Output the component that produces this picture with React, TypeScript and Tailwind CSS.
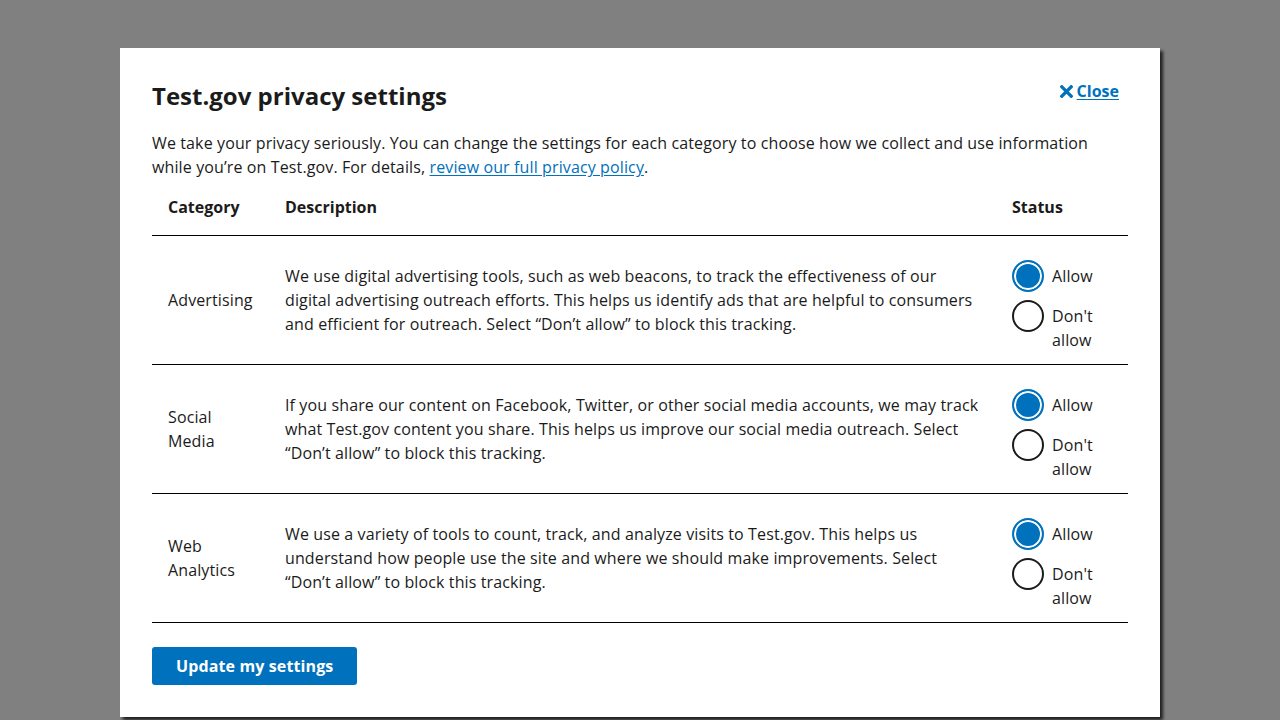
import React, { useState } from "react";

/* data */
const rows = [
  {
    key: "ads",
    name: "Advertising",
    text: "We use digital advertising tools, such as web beacons, to track the effectiveness of our digital advertising outreach efforts. This helps us identify ads that are helpful to consumers and efficient for outreach. Select \u201cDon\u2019t allow\u201d to block this tracking.",
  },
  {
    key: "social",
    name: "Social Media",
    text: "If you share our content on Facebook, Twitter, or other social media accounts, we may track what Test.gov content you share. This helps us improve our social media outreach. Select \u201cDon\u2019t allow\u201d to block this tracking.",
  },
  {
    key: "analytics",
    name: "Web Analytics",
    text: "We use a variety of tools to count, track, and analyze visits to Test.gov. This helps us understand how people use the site and where we should make improvements. Select \u201cDon\u2019t allow\u201d to block this tracking.",
  },
];

function Radio({ checked, label, onClick }: { checked: boolean; label: string; onClick: () => void }) {
  return (
    <button type="button" onClick={onClick} className="flex items-start gap-2 text-left">
      <span
        className={
          checked
            ? "w-8 h-8 shrink-0 rounded-full border-2 border-[#0071bc] bg-[#0071bc] shadow-[inset_0_0_0_2px_#fff]"
            : "w-8 h-8 shrink-0 rounded-full border-2 border-[#1b1b1b] bg-white"
        }
      />
      <span className="pt-1 leading-6">{label}</span>
    </button>
  );
}

export default function App() {
  const [status, setStatus] = useState<Record<string, boolean>>({ ads: true, social: true, analytics: true });

  return (
    <div
      className="min-h-[720px] bg-[#808080] pt-12 text-[#1b1b1b] text-base tracking-[0.12px]"
      style={{ fontFamily: '"Open Sans", "Noto Sans", sans-serif' }}
    >
      <div className="mx-auto w-[1040px] bg-white px-8 pt-8 pb-8 shadow-[3px_3px_3px_rgba(0,0,0,0.75)]">
        {/* header */}
        <div className="flex items-start justify-between">
          <h1 className="text-2xl font-bold leading-8 tracking-normal">Test.gov privacy settings</h1>
          <a href="#" className="mr-[9px] -mt-px flex items-center gap-1 font-bold leading-6 tracking-normal text-[#0071bc]">
            <svg viewBox="0 0 14 14" className="w-[13px] h-[13px]">
              <path d="M2 2 L12 12 M12 2 L2 12" stroke="currentColor" strokeWidth="3.6" strokeLinecap="square" />
            </svg>
            <span className="underline underline-offset-2">Close</span>
          </a>
        </div>

        <p className="mt-[19px] leading-6">
          We take your privacy seriously. You can change the settings for each category to choose how we collect and use information
          while you&rsquo;re on Test.gov. For details,{" "}
          <a href="#" className="text-[#0071bc] underline underline-offset-2">review our full privacy policy</a>.
        </p>

        {/* table */}
        <div className="grid grid-cols-[117px_1fr_132px]">
          <div className="px-4 py-4 font-bold leading-6 tracking-normal border-b border-black">Category</div>
          <div className="px-4 py-4 font-bold leading-6 tracking-normal border-b border-black">Description</div>
          <div className="px-4 py-4 font-bold leading-6 tracking-normal border-b border-black">Status</div>

          {rows.map((r) => (
            <React.Fragment key={r.key}>
              <div className="px-4 flex items-center leading-6 border-b border-black">{r.name}</div>
              <div className="pl-4 pr-[15px] flex items-center leading-6 border-b border-black">{r.text}</div>
              <div className="px-4 pt-6 pb-3 flex flex-col gap-2 border-b border-black">
                <Radio checked={status[r.key]} label="Allow" onClick={() => setStatus({ ...status, [r.key]: true })} />
                <Radio checked={!status[r.key]} label="Don't allow" onClick={() => setStatus({ ...status, [r.key]: false })} />
              </div>
            </React.Fragment>
          ))}
        </div>

        <button
          type="button"
          className="mt-6 h-[38px] rounded-[3px] bg-[#0071bc] px-6 font-bold text-white leading-6"
        >
          Update my settings
        </button>
      </div>
    </div>
  );
}
